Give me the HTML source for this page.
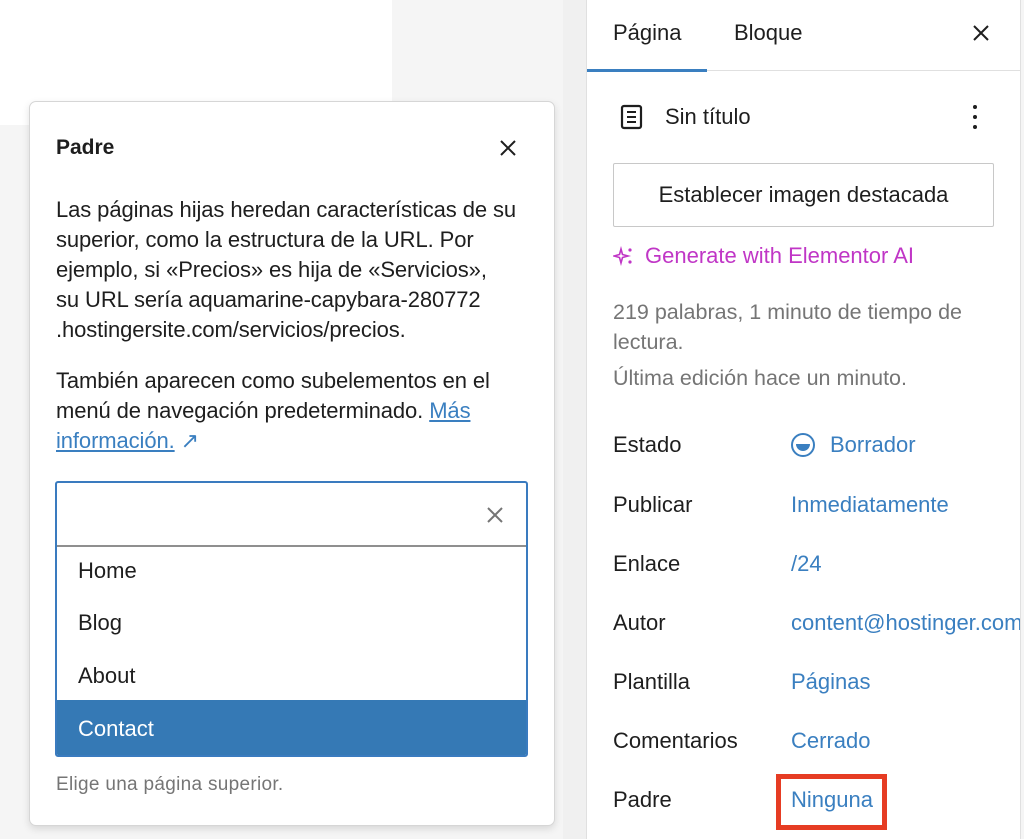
<!DOCTYPE html>
<html><head><meta charset="utf-8"><style>
*{box-sizing:border-box;margin:0;padding:0}
body{width:1024px;height:839px;position:relative;overflow:hidden;background:#f5f5f5;font-family:"Liberation Sans",sans-serif;color:#1e1e1e}
.a{position:absolute;white-space:nowrap}
.lbl{font-size:22px;color:#1e1e1e}
.val{font-size:22px;color:#3a7fc0}
.p{font-size:22px;line-height:30px;color:#1e1e1e;letter-spacing:-0.1px}
</style></head><body>
<div class="a" style="left:0;top:0;width:392px;height:125px;background:#fff"></div>
<div class="a" style="left:563px;top:0;width:24px;height:839px;background:#f0f0f0"></div>
<div class="a" style="left:586px;top:0;width:435px;height:839px;background:#fff;border-left:1px solid #e0e0e0;border-right:1px solid #e0e0e0"></div>
<!-- sidebar -->
<div class="a" style="left:587px;top:70px;width:433px;height:1px;background:#e0e0e0"></div>
<div class="a" style="left:587px;top:69px;width:120px;height:3px;background:#3a7fc0"></div>
<div class="a lbl" style="left:613px;top:20px">Página</div>
<div class="a lbl" style="left:734px;top:20px">Bloque</div>
<svg class="a" style="left:970px;top:22px" width="22" height="22" viewBox="0 0 22 22"><path d="M4 4L18 18M18 4L4 18" stroke="#1e1e1e" stroke-width="2"/></svg>
<svg class="a" style="left:619px;top:104px" width="26" height="26" viewBox="0 0 26 26"><rect x="3" y="2" width="19" height="22" rx="2" fill="none" stroke="#1e1e1e" stroke-width="2.2"/><path d="M8 8h9M8 13h9M8 18h9" stroke="#1e1e1e" stroke-width="2"/></svg>
<div class="a lbl" style="left:665px;top:104px">Sin título</div>
<svg class="a" style="left:968px;top:104px" width="14" height="26"><circle cx="7" cy="3" r="2" fill="#1e1e1e"/><circle cx="7" cy="13" r="2" fill="#1e1e1e"/><circle cx="7" cy="23" r="2" fill="#1e1e1e"/></svg>
<div class="a" style="left:613px;top:163px;width:381px;height:64px;border:1px solid #c8c8c8;border-radius:2px;font-size:22px;text-align:center;line-height:62px">Establecer imagen destacada</div>
<svg class="a" style="left:613px;top:246px" width="22" height="20" viewBox="0 0 22 20"><path d="M8 3L9.5 8.5 15 10 9.5 11.5 8 17 6.5 11.5 1 10 6.5 8.5Z" fill="none" stroke="#c036c6" stroke-width="1.6"/><circle cx="17" cy="4" r="1.6" fill="#c036c6"/><circle cx="17" cy="16" r="1.6" fill="#c036c6"/></svg>
<div class="a" style="left:645px;top:243px;font-size:22px;color:#c036c6">Generate with Elementor AI</div>
<div class="a" style="left:613px;top:297px;font-size:21.5px;line-height:30px;color:#757575;white-space:normal;width:385px">219 palabras, 1 minuto de tiempo de lectura.</div>
<div class="a" style="left:613px;top:366px;font-size:21.5px;color:#757575">Última edición hace un minuto.</div>
<div class="a lbl" style="left:613px;top:432px">Estado</div>
<svg class="a" style="left:790px;top:432px" width="26" height="26" viewBox="0 0 26 26"><circle cx="13" cy="13" r="11" fill="none" stroke="#3a7fc0" stroke-width="2"/><path d="M6 12h14a7 7 0 0 1-14 0Z" fill="#3a7fc0"/></svg>
<div class="a val" style="left:830px;top:432px">Borrador</div>
<div class="a lbl" style="left:613px;top:492px">Publicar</div><div class="a val" style="left:791px;top:492px">Inmediatamente</div>
<div class="a lbl" style="left:613px;top:551px">Enlace</div><div class="a val" style="left:791px;top:551px">/24</div>
<div class="a lbl" style="left:613px;top:610px">Autor</div><div class="a val" style="left:791px;top:610px;width:229px;overflow:hidden">content@hostinger.com</div>
<div class="a lbl" style="left:613px;top:669px">Plantilla</div><div class="a val" style="left:791px;top:669px">Páginas</div>
<div class="a lbl" style="left:613px;top:728px">Comentarios</div><div class="a val" style="left:791px;top:728px">Cerrado</div>
<div class="a lbl" style="left:613px;top:787px">Padre</div><div class="a val" style="left:791px;top:787px">Ninguna</div>
<div class="a" style="left:776px;top:774px;width:111px;height:56px;border:5px solid #e63c23"></div>
<!-- popover -->
<div class="a" style="left:29px;top:101px;width:526px;height:725px;background:#fff;border:1px solid #d6d6d6;border-radius:7px;box-shadow:0 3px 8px rgba(0,0,0,.12)"></div>
<div class="a" style="left:56px;top:136px;font-size:21px;font-weight:bold">Padre</div>
<svg class="a" style="left:498px;top:138px" width="20" height="20" viewBox="0 0 20 20"><path d="M3 3L17 17M17 3L3 17" stroke="#1e1e1e" stroke-width="2"/></svg>
<div class="a p" style="left:56px;top:195px">Las páginas hijas heredan características de su<br>superior, como la estructura de la URL. Por<br>ejemplo, si «Precios» es hija de «Servicios»,<br>su URL sería aquamarine-capybara-280772<br>.hostingersite.com/servicios/precios.</div>
<div class="a p" style="left:56px;top:366px">También aparecen como subelementos en el<br>menú de navegación predeterminado. <span style="color:#3a7fc0;text-decoration:underline">Más</span><br><span style="color:#3a7fc0;text-decoration:underline">información.</span> <span style="color:#3a7fc0">↗</span></div>
<div class="a" style="left:55px;top:481px;width:473px;height:276px;border:2px solid #3a7bbf;border-radius:3px;overflow:hidden;background:#fff">
<div style="height:64px;border-bottom:2px solid #8f8f8f;position:relative"><svg style="position:absolute;left:429px;top:23px" width="18" height="18" viewBox="0 0 18 18"><path d="M2 2L16 16M16 2L2 16" stroke="#757575" stroke-width="2"/></svg></div>
<div style="height:51px;line-height:48px;padding-left:21px;font-size:22px">Home</div>
<div style="height:52px;line-height:50px;padding-left:21px;font-size:22px">Blog</div>
<div style="height:50px;line-height:52px;padding-left:21px;font-size:22px">About</div>
<div style="height:59px;line-height:58px;padding-left:21px;font-size:22px;background:#3579b5;color:#fff">Contact</div>
</div>
<div class="a" style="left:56px;top:774px;font-size:19px;letter-spacing:0.3px;color:#757575">Elige una página superior.</div>
</body></html>
